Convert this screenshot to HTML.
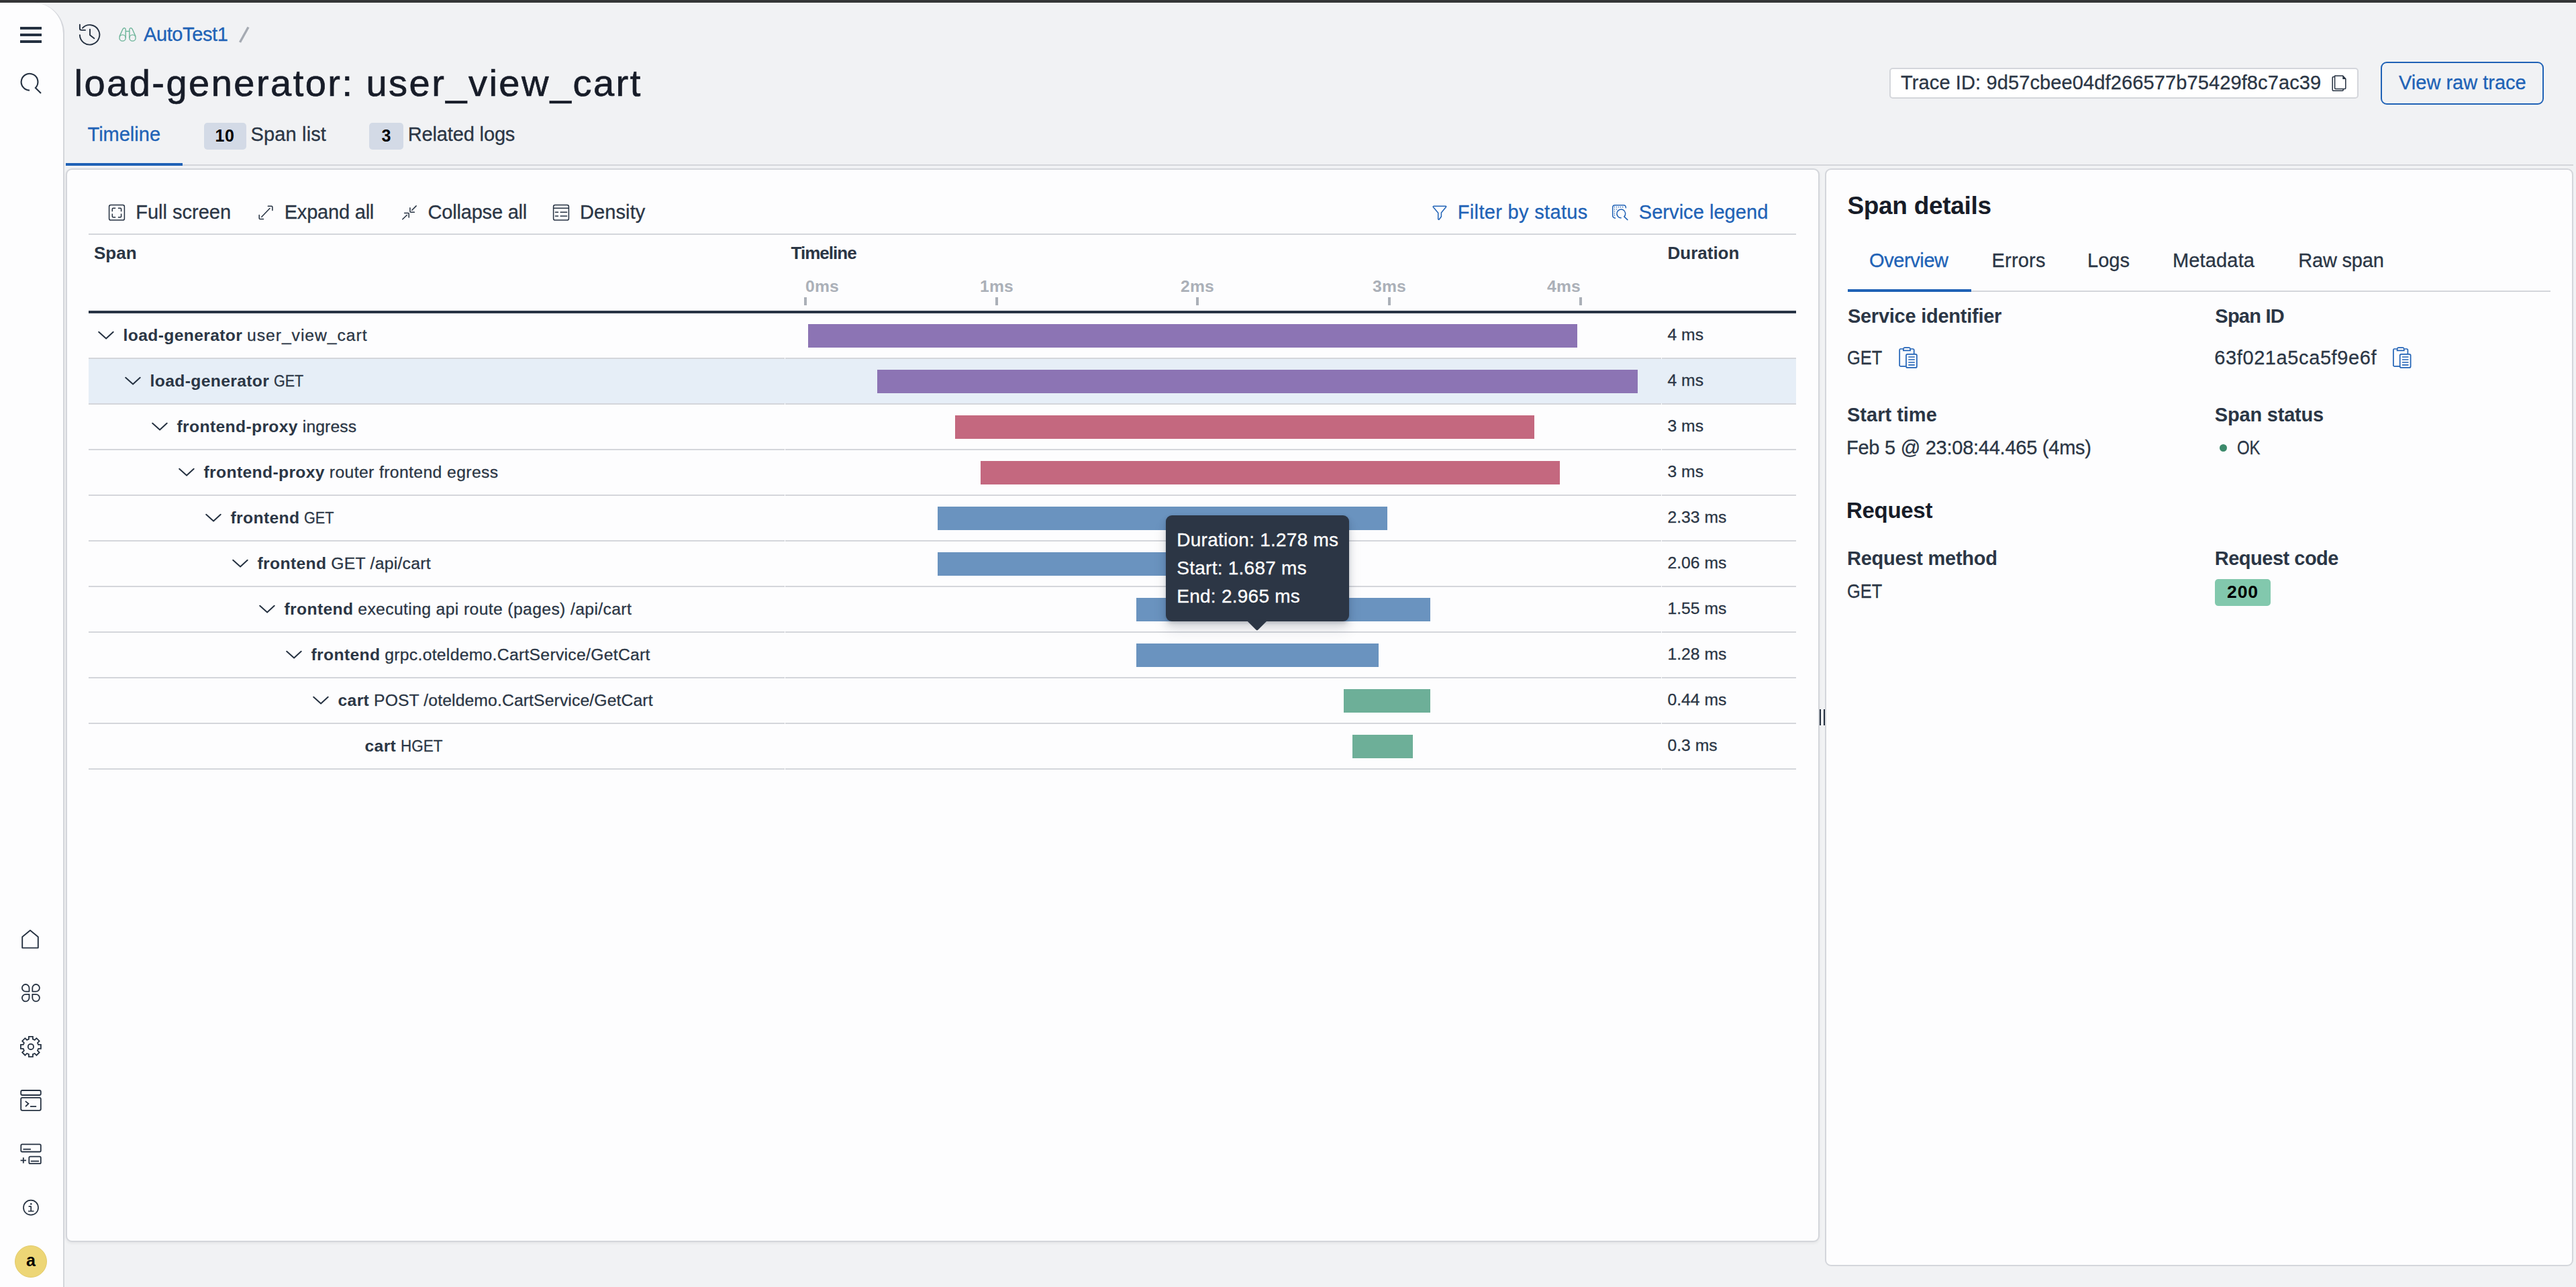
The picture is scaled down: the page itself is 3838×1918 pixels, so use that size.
<!DOCTYPE html>
<html><head><meta charset="utf-8"><title>Trace</title>
<style>
html,body{margin:0;padding:0;}
body{width:3838px;height:1918px;overflow:hidden;background:#f1f2f4;position:relative;font-family:"Liberation Sans", sans-serif;}
.t{position:absolute;white-space:pre;line-height:1;font-family:"Liberation Sans", sans-serif;}
.w{-webkit-text-stroke:0.3px currentColor;}
.r{position:absolute;display:block;}
b{font-weight:700;}
</style></head><body>
<div class="r" style="left:0px;top:0px;width:3838px;height:4px;background:#353637;"></div>
<div class="r" style="left:0;top:4px;width:94px;height:1914px;background:#fdfdfe;border-right:2px solid #d4d6db;border-top-right-radius:46px;"></div>
<div class="r" style="left:30px;top:40px;width:32px;height:4px;background:#253141;"></div>
<div class="r" style="left:30px;top:50px;width:32px;height:4px;background:#253141;"></div>
<div class="r" style="left:30px;top:60px;width:32px;height:4px;background:#253141;"></div>
<svg class="r" style="left:20px;top:100px" width="50" height="50" viewBox="20 100 50 50"><path d="M44 134.6 A12.4 12.4 0 1 1 52.9 130.9 L61 139" fill="none" stroke="#253141" stroke-width="2.1"/></svg>
<svg class="r" style="left:25px;top:1378px" width="40" height="42" viewBox="25 1378 40 42"><path d="M33.2 1412.6 V1396.3 L45 1386.6 L56.8 1396.3 V1412.6 Z" fill="none" stroke="#253141" stroke-width="1.9" stroke-linejoin="round"/></svg>
<svg class="r" style="left:25px;top:1460px" width="40" height="40" viewBox="25 1460 40 40"><g fill="none" stroke="#253141" stroke-width="1.8" stroke-linejoin="round"><path d="M43.5 1477.6 H38.3 A5.3 5.3 0 1 1 43.5 1472.3 Z"/><path d="M48.3 1477.6 V1472.3 A5.3 5.3 0 1 1 53.6 1477.6 Z"/><path d="M43.5 1481.8 V1487.1 A5.3 5.3 0 1 1 38.3 1481.8 Z"/><path d="M48.3 1481.8 H53.6 A5.3 5.3 0 1 1 48.3 1487.1 Z"/></g></svg>
<svg class="r" style="left:25px;top:1538px" width="42" height="44" viewBox="25 1538 42 44"><path d="M42.90 1548.70 L42.90 1544.90 L48.90 1544.90 L48.90 1548.70 L51.70 1549.86 L54.39 1547.17 L58.63 1551.41 L55.94 1554.10 L57.10 1556.90 L60.90 1556.90 L60.90 1562.90 L57.10 1562.90 L55.94 1565.70 L58.63 1568.39 L54.39 1572.63 L51.70 1569.94 L48.90 1571.10 L48.90 1574.90 L42.90 1574.90 L42.90 1571.10 L40.10 1569.94 L37.41 1572.63 L33.17 1568.39 L35.86 1565.70 L34.70 1562.90 L30.90 1562.90 L30.90 1556.90 L34.70 1556.90 L35.86 1554.10 L33.17 1551.41 L37.41 1547.17 L40.10 1549.86 Z" fill="none" stroke="#253141" stroke-width="1.8" stroke-linejoin="miter"/><circle cx="45.9" cy="1559.9" r="4.1" fill="none" stroke="#253141" stroke-width="1.8"/></svg>
<svg class="r" style="left:25px;top:1618px" width="42" height="44" viewBox="25 1618 42 44"><g fill="none" stroke="#253141" stroke-width="1.8"><rect x="31.2" y="1625" width="29.6" height="7" rx="2"/><rect x="31.2" y="1635.9" width="29.6" height="18.9" rx="2"/><path d="M37.8 1641.1 L42.4 1644.9 L38 1649" /><path d="M45 1648.9 H54.1"/></g></svg>
<svg class="r" style="left:25px;top:1700px" width="42" height="40" viewBox="25 1700 42 40"><g fill="none" stroke="#253141" stroke-width="1.8"><rect x="31.3" y="1705.4" width="29.5" height="11.1" rx="1.8"/><path d="M34.4 1712.7 H45.9"/><rect x="43.3" y="1723.6" width="17.5" height="10.6" rx="1.8"/><path d="M45.8 1730.5 H58"/><path d="M30.6 1729.3 H39 M34.8 1725.1 V1733.5"/></g></svg>
<svg class="r" style="left:28px;top:1782px" width="36" height="36" viewBox="28 1782 36 36"><g fill="none" stroke="#253141" stroke-width="1.7"><circle cx="46" cy="1799.7" r="11"/><path d="M46.2 1797.4 V1805 M42 1805 H50.5 M42.6 1797.8 H46.2"/></g><circle cx="46.3" cy="1794.3" r="1.3" fill="#253141"/></svg>
<div class="r" style="left:22px;top:1856px;width:48px;height:48px;box-sizing:border-box;border-radius:50%;background:#edd676;border:1px solid #e3cb6c;"></div>
<div class="t" style="left:39.0px;top:1866.1px;font-size:25px;font-weight:700;color:#000;">a</div>
<svg class="r" style="left:110px;top:30px" width="50" height="45" viewBox="110 30 50 45"><g fill="none" stroke="#253141" stroke-width="1.9" stroke-linecap="round" stroke-linejoin="round"><path d="M118.9 52.1 A14.7 14.7 0 1 0 122.9 41.8"/><path d="M118.9 36.8 V42.6 Q118.9 44.9 121.2 44.9 H127"/><path d="M134 43.8 V52.2 L140.4 57.2"/></g></svg>
<svg class="r" style="left:172px;top:36px" width="36" height="30" viewBox="172 36 36 30"><g fill="none" stroke="#6db59a" stroke-width="1.4" stroke-linejoin="round"><circle cx="182.6" cy="56.5" r="4.6"/><circle cx="197.5" cy="56.5" r="4.6"/><path d="M177.9 54.6 L183 43.3 Q184.6 40.9 186.4 42.2 Q187.2 42.9 187.2 44 V56.5"/><path d="M202.2 54.6 L197.1 43.3 Q195.5 40.9 193.7 42.2 Q192.9 42.9 192.9 44 V56.5"/><path d="M187.2 46.6 H192.9"/></g></svg>
<div class="t w" style="left:214.0px;top:36.5px;font-size:29px;font-weight:400;color:#2062b6;letter-spacing:-0.4px;">AutoTest1</div>
<svg class="r" style="left:350px;top:36px" width="28" height="32" viewBox="350 36 28 32"><path d="M370 40.5 L357.5 63" stroke="#a5aab2" stroke-width="3.4"/></svg>
<div class="t" style="left:110.6px;top:95.6px;font-size:56px;font-weight:400;color:#171c28;letter-spacing:2.47px;-webkit-text-stroke:0.7px #171c28;">load-generator: user_view_cart</div>
<div class="t w" style="left:130.5px;top:185.5px;font-size:29px;font-weight:400;color:#2062b6;">Timeline</div>
<div class="r" style="left:304px;top:183px;width:63px;height:40px;border-radius:5px;background:#d3dae6;"></div>
<div class="t" style="left:320.5px;top:189.8px;font-size:25px;font-weight:700;color:#000;letter-spacing:0.5px;">10</div>
<div class="t w" style="left:373.5px;top:185.5px;font-size:29px;font-weight:400;color:#2b3645;letter-spacing:0.15px;">Span list</div>
<div class="r" style="left:550px;top:183px;width:51px;height:40px;border-radius:5px;background:#d3dae6;"></div>
<div class="t" style="left:568.5px;top:189.8px;font-size:25px;font-weight:700;color:#000;">3</div>
<div class="t w" style="left:607.8px;top:185.5px;font-size:29px;font-weight:400;color:#2b3645;letter-spacing:-0.15px;">Related logs</div>
<div class="r" style="left:98px;top:245px;width:3736px;height:2px;background:#d4d6db;"></div>
<div class="r" style="left:98px;top:243px;width:174px;height:4px;background:#2062b6;"></div>
<div class="r" style="left:2815px;top:101px;width:699px;height:46px;box-sizing:border-box;border:2px solid #d4d6db;border-radius:5px;background:#fff;"></div>
<div class="t w" style="left:2832.0px;top:108.5px;font-size:29px;font-weight:400;color:#2b3645;letter-spacing:0.12px;">Trace ID: 9d57cbee04df266577b75429f8c7ac39</div>
<svg class="r" style="left:3470px;top:108px" width="30" height="32" viewBox="3470 108 30 32"><g fill="none" stroke="#253141" stroke-width="1.5" stroke-linejoin="round"><path d="M3478.6 112.9 H3490.6 L3494.8 117.5 V131.2 A1.2 1.2 0 0 1 3493.6 132.4 H3479.8 A1.2 1.2 0 0 1 3478.6 131.2 Z"/><path d="M3478.6 114.6 H3476.4 A1.2 1.2 0 0 0 3475.2 115.8 V134 A1.2 1.2 0 0 0 3476.4 135.2 H3490 A1.2 1.2 0 0 0 3491.2 134 V132.4"/></g><path d="M3490.3 112.5 L3495.2 117.9 H3490.3 Z" fill="#253141"/></svg>
<div class="r" style="left:3547px;top:92px;width:243px;height:64px;box-sizing:border-box;border:2.5px solid #2062b6;border-radius:9px;"></div>
<div class="t w" style="left:3574.0px;top:108.5px;font-size:29px;font-weight:400;color:#2062b6;">View raw trace</div>
<div class="r" style="left:98px;top:251px;width:2613px;height:1600px;box-sizing:border-box;border:2px solid #d4d6db;border-radius:9px;background:#fdfdfe;box-shadow:0 2px 4px rgba(0,0,0,0.06);"></div>
<svg class="r" style="left:158px;top:300px" width="34" height="34" viewBox="158 300 34 34"><g fill="none" stroke="#253141" stroke-width="1.5" stroke-linejoin="round"><rect x="162.6" y="305.6" width="22.8" height="22.5" rx="2.4"/><path d="M167.3 315.2 V311.4 Q167.3 310.2 168.5 310.2 H172.2 M175.9 310.2 H179.4 Q180.6 310.2 180.6 311.4 V315.2 M180.6 318.6 V322.5 Q180.6 323.7 179.4 323.7 H175.9 M172.2 323.7 H168.5 Q167.3 323.7 167.3 322.5 V318.6"/></g></svg>
<div class="t w" style="left:202.2px;top:301.5px;font-size:29px;font-weight:400;color:#2b3645;">Full screen</div>
<svg class="r" style="left:380px;top:300px" width="32" height="32" viewBox="380 300 32 32"><g fill="none" stroke="#253141" stroke-width="1.5" stroke-linecap="round"><path d="M402 310.6 L389.8 323.2 M399.3 307.2 H404.6 Q405.9 307.2 405.9 308.5 V313.4 M386.2 320.4 V325.3 Q386.2 326.6 387.5 326.6 H392.5"/></g></svg>
<div class="t w" style="left:423.7px;top:301.5px;font-size:29px;font-weight:400;color:#2b3645;letter-spacing:-0.2px;">Expand all</div>
<svg class="r" style="left:594px;top:300px" width="32" height="32" viewBox="594 300 32 32"><g fill="none" stroke="#253141" stroke-width="1.5" stroke-linecap="round"><path d="M620.1 306.9 L613.8 313.2 M610.9 309.8 V315 Q610.9 316.2 612.1 316.2 H617.4 M599.8 326.7 L606.3 320.5 M602.6 317.5 H608 Q609.2 317.5 609.2 318.7 V323.9"/></g></svg>
<div class="t w" style="left:637.6px;top:301.5px;font-size:29px;font-weight:400;color:#2b3645;letter-spacing:-0.2px;">Collapse all</div>
<svg class="r" style="left:820px;top:300px" width="32" height="34" viewBox="820 300 32 34"><g fill="none" stroke="#253141" stroke-width="1.5" stroke-linecap="round"><rect x="824.6" y="305.6" width="22.8" height="22.5" rx="2.4"/><path d="M824.6 310.2 H847.4 M827.4 316.2 H831.5 M835.1 316.2 H844.6 M827.4 322.1 H831.5 M835.1 322.1 H844.6"/></g></svg>
<div class="t w" style="left:864.0px;top:301.5px;font-size:29px;font-weight:400;color:#2b3645;letter-spacing:0.1px;">Density</div>
<svg class="r" style="left:2130px;top:300px" width="30" height="32" viewBox="2130 300 30 32"><path d="M2136.4 307.2 H2153.8 Q2155.2 307.4 2154.4 308.6 L2147.4 317 V322.8 L2144.4 326.8 Q2143.2 327.8 2142.7 326.5 V317.2 L2135.3 308.6 Q2134.8 307.4 2136.4 307.2 Z" fill="none" stroke="#2062b6" stroke-width="1.5" stroke-linejoin="round"/></svg>
<div class="t w" style="left:2171.8px;top:301.5px;font-size:29px;font-weight:400;color:#2062b6;letter-spacing:0.33px;">Filter by status</div>
<svg class="r" style="left:2398px;top:300px" width="34" height="34" viewBox="2398 300 34 34"><g fill="none" stroke="#2062b6" stroke-width="1.5" stroke-linecap="round"><path d="M2406.5 325.1 Q2402.7 324.6 2402.7 321 V309.3 Q2402.7 305.7 2406.3 305.7 H2419 Q2422.4 305.7 2422.4 309.7"/><path d="M2415.2 324.8 A6.4 6.4 0 1 1 2419.9 322.9 L2424.9 327.6"/></g><g fill="#2062b6"><circle cx="2405.5" cy="308.6" r="0.8"/><circle cx="2408.6" cy="308.6" r="0.8"/><circle cx="2411.6" cy="308.6" r="0.8"/><circle cx="2414.5" cy="308.6" r="0.8"/><circle cx="2417.7" cy="308.6" r="0.8"/><circle cx="2405.5" cy="311.7" r="0.8"/><circle cx="2408.6" cy="311.7" r="0.8"/><circle cx="2405.5" cy="314.7" r="0.8"/><circle cx="2405.5" cy="317.7" r="0.8"/><circle cx="2405.5" cy="320.6" r="0.8"/></g></svg>
<div class="t w" style="left:2441.8px;top:301.5px;font-size:29px;font-weight:400;color:#2062b6;letter-spacing:0.05px;">Service legend</div>
<div class="r" style="left:132px;top:348px;width:2544px;height:2px;background:#d4d6db;"></div>
<div class="t" style="left:140.0px;top:364.0px;font-size:26px;font-weight:700;color:#2b3645;">Span</div>
<div class="t" style="left:1178.6px;top:364.0px;font-size:26px;font-weight:700;color:#2b3645;letter-spacing:-1.0px;">Timeline</div>
<div class="t" style="left:2484.5px;top:364.0px;font-size:26px;font-weight:700;color:#2b3645;">Duration</div>
<div class="r" style="left:1198px;top:443px;width:4px;height:12px;background:#abb0b8;"></div>
<div class="r" style="left:1483px;top:443px;width:4px;height:12px;background:#abb0b8;"></div>
<div class="r" style="left:1782px;top:443px;width:4px;height:12px;background:#abb0b8;"></div>
<div class="r" style="left:2068px;top:443px;width:4px;height:12px;background:#abb0b8;"></div>
<div class="r" style="left:2353px;top:443px;width:4px;height:12px;background:#abb0b8;"></div>
<div class="t" style="left:1200.0px;top:415.1px;font-size:24.7px;font-weight:700;color:#abb0b8;letter-spacing:0.2px;">0ms</div>
<div class="t" style="left:1445px;width:80px;text-align:center;top:415.1px;font-size:24.7px;font-weight:700;color:#abb0b8;letter-spacing:0.2px">1ms</div>
<div class="t" style="left:1744px;width:80px;text-align:center;top:415.1px;font-size:24.7px;font-weight:700;color:#abb0b8;letter-spacing:0.2px">2ms</div>
<div class="t" style="left:2030px;width:80px;text-align:center;top:415.1px;font-size:24.7px;font-weight:700;color:#abb0b8;letter-spacing:0.2px">3ms</div>
<div class="t" style="left:2275px;width:80px;text-align:right;top:415.1px;font-size:24.7px;font-weight:700;color:#abb0b8;letter-spacing:0.2px">4ms</div>
<div class="r" style="left:132px;top:463px;width:2544px;height:4px;background:#283445;"></div>
<div class="r" style="left:132px;top:535px;width:2544px;height:66px;background:#e6eef7;"></div>
<div class="r" style="left:132px;top:533px;width:1037px;height:2px;background:#d4d6db;"></div>
<div class="r" style="left:1170px;top:533px;width:1305px;height:2px;background:#d4d6db;"></div>
<div class="r" style="left:2476px;top:533px;width:200px;height:2px;background:#d4d6db;"></div>
<div class="r" style="left:1204px;top:483px;width:1146px;height:35px;background:#8c74b4;"></div>
<svg class="r" style="left:144px;top:490.3px" width="30" height="20.0" viewBox="144 490.3 30 20.0"><path d="M147.2 495.0 L158.1 504.90000000000003 L168.7 495.0" fill="none" stroke="#253141" stroke-width="2" stroke-linecap="round" stroke-linejoin="round"/></svg>
<div class="t" style="left:183.5px;top:487.7px;font-size:24.7px;color:#2b3645"><b style="letter-spacing:0.35px">load-generator</b> <span class="w" style="letter-spacing:0.95px">user_view_cart</span></div>
<div class="t w" style="left:2484.5px;top:487.2px;font-size:24.7px;font-weight:400;color:#2b3645;">4 ms</div>
<div class="r" style="left:132px;top:601px;width:1037px;height:2px;background:#d4d6db;"></div>
<div class="r" style="left:1170px;top:601px;width:1305px;height:2px;background:#d4d6db;"></div>
<div class="r" style="left:2476px;top:601px;width:200px;height:2px;background:#d4d6db;"></div>
<div class="r" style="left:1307px;top:551px;width:1133px;height:35px;background:#8c74b4;"></div>
<svg class="r" style="left:184px;top:558.3px" width="30" height="20.0" viewBox="184 558.3 30 20.0"><path d="M187.2 563.0 L198.1 572.9 L208.7 563.0" fill="none" stroke="#253141" stroke-width="2" stroke-linecap="round" stroke-linejoin="round"/></svg>
<div class="t" style="left:223.5px;top:555.7px;font-size:24.7px;color:#2b3645"><b style="letter-spacing:0.35px">load-generator</b> <span class="w" style="display:inline-block;transform:scaleX(0.87);transform-origin:0 0">GET</span></div>
<div class="t w" style="left:2484.5px;top:555.2px;font-size:24.7px;font-weight:400;color:#2b3645;">4 ms</div>
<div class="r" style="left:132px;top:669px;width:1037px;height:2px;background:#d4d6db;"></div>
<div class="r" style="left:1170px;top:669px;width:1305px;height:2px;background:#d4d6db;"></div>
<div class="r" style="left:2476px;top:669px;width:200px;height:2px;background:#d4d6db;"></div>
<div class="r" style="left:1423px;top:619px;width:863px;height:35px;background:#c4687f;"></div>
<svg class="r" style="left:224px;top:626.3px" width="30" height="20.0" viewBox="224 626.3 30 20.0"><path d="M227.2 631.0 L238.1 640.9 L248.7 631.0" fill="none" stroke="#253141" stroke-width="2" stroke-linecap="round" stroke-linejoin="round"/></svg>
<div class="t" style="left:263.5px;top:623.7px;font-size:24.7px;color:#2b3645"><b style="letter-spacing:0.35px">frontend-proxy</b> <span class="w" style="letter-spacing:0.1px">ingress</span></div>
<div class="t w" style="left:2484.5px;top:623.2px;font-size:24.7px;font-weight:400;color:#2b3645;">3 ms</div>
<div class="r" style="left:132px;top:737px;width:1037px;height:2px;background:#d4d6db;"></div>
<div class="r" style="left:1170px;top:737px;width:1305px;height:2px;background:#d4d6db;"></div>
<div class="r" style="left:2476px;top:737px;width:200px;height:2px;background:#d4d6db;"></div>
<div class="r" style="left:1461px;top:687px;width:863px;height:35px;background:#c4687f;"></div>
<svg class="r" style="left:264px;top:694.3px" width="30" height="20.0" viewBox="264 694.3 30 20.0"><path d="M267.2 699.0 L278.1 708.9 L288.7 699.0" fill="none" stroke="#253141" stroke-width="2" stroke-linecap="round" stroke-linejoin="round"/></svg>
<div class="t" style="left:303.5px;top:691.7px;font-size:24.7px;color:#2b3645"><b style="letter-spacing:0.35px">frontend-proxy</b> <span class="w" style="letter-spacing:0.4px">router frontend egress</span></div>
<div class="t w" style="left:2484.5px;top:691.2px;font-size:24.7px;font-weight:400;color:#2b3645;">3 ms</div>
<div class="r" style="left:132px;top:805px;width:1037px;height:2px;background:#d4d6db;"></div>
<div class="r" style="left:1170px;top:805px;width:1305px;height:2px;background:#d4d6db;"></div>
<div class="r" style="left:2476px;top:805px;width:200px;height:2px;background:#d4d6db;"></div>
<div class="r" style="left:1397px;top:755px;width:670px;height:35px;background:#6a93bf;"></div>
<svg class="r" style="left:304px;top:762.3px" width="30" height="20.0" viewBox="304 762.3 30 20.0"><path d="M307.2 767.0 L318.1 776.9 L328.7 767.0" fill="none" stroke="#253141" stroke-width="2" stroke-linecap="round" stroke-linejoin="round"/></svg>
<div class="t" style="left:343.5px;top:759.7px;font-size:24.7px;color:#2b3645"><b style="letter-spacing:0.35px">frontend</b> <span class="w" style="display:inline-block;transform:scaleX(0.877);transform-origin:0 0">GET</span></div>
<div class="t w" style="left:2484.5px;top:759.2px;font-size:24.7px;font-weight:400;color:#2b3645;">2.33 ms</div>
<div class="r" style="left:132px;top:873px;width:1037px;height:2px;background:#d4d6db;"></div>
<div class="r" style="left:1170px;top:873px;width:1305px;height:2px;background:#d4d6db;"></div>
<div class="r" style="left:2476px;top:873px;width:200px;height:2px;background:#d4d6db;"></div>
<div class="r" style="left:1397px;top:823px;width:592px;height:35px;background:#6a93bf;"></div>
<svg class="r" style="left:344px;top:830.3px" width="30" height="20.0" viewBox="344 830.3 30 20.0"><path d="M347.2 835.0 L358.1 844.9 L368.7 835.0" fill="none" stroke="#253141" stroke-width="2" stroke-linecap="round" stroke-linejoin="round"/></svg>
<div class="t" style="left:383.5px;top:827.7px;font-size:24.7px;color:#2b3645"><b style="letter-spacing:0.35px">frontend</b> <span class="w" style="letter-spacing:0.27px">GET /api/cart</span></div>
<div class="t w" style="left:2484.5px;top:827.2px;font-size:24.7px;font-weight:400;color:#2b3645;">2.06 ms</div>
<div class="r" style="left:132px;top:941px;width:1037px;height:2px;background:#d4d6db;"></div>
<div class="r" style="left:1170px;top:941px;width:1305px;height:2px;background:#d4d6db;"></div>
<div class="r" style="left:2476px;top:941px;width:200px;height:2px;background:#d4d6db;"></div>
<div class="r" style="left:1693px;top:891px;width:438px;height:35px;background:#6a93bf;"></div>
<svg class="r" style="left:384px;top:898.3px" width="30" height="20.0" viewBox="384 898.3 30 20.0"><path d="M387.2 903.0 L398.1 912.9 L408.7 903.0" fill="none" stroke="#253141" stroke-width="2" stroke-linecap="round" stroke-linejoin="round"/></svg>
<div class="t" style="left:423.5px;top:895.7px;font-size:24.7px;color:#2b3645"><b style="letter-spacing:0.35px">frontend</b> <span class="w" style="letter-spacing:0.38px">executing api route (pages) /api/cart</span></div>
<div class="t w" style="left:2484.5px;top:895.2px;font-size:24.7px;font-weight:400;color:#2b3645;">1.55 ms</div>
<div class="r" style="left:132px;top:1009px;width:1037px;height:2px;background:#d4d6db;"></div>
<div class="r" style="left:1170px;top:1009px;width:1305px;height:2px;background:#d4d6db;"></div>
<div class="r" style="left:2476px;top:1009px;width:200px;height:2px;background:#d4d6db;"></div>
<div class="r" style="left:1693px;top:959px;width:361px;height:35px;background:#6a93bf;"></div>
<svg class="r" style="left:424px;top:966.3px" width="30" height="20.0" viewBox="424 966.3 30 20.0"><path d="M427.2 971.0 L438.1 980.9 L448.7 971.0" fill="none" stroke="#253141" stroke-width="2" stroke-linecap="round" stroke-linejoin="round"/></svg>
<div class="t" style="left:463.5px;top:963.7px;font-size:24.7px;color:#2b3645"><b style="letter-spacing:0.35px">frontend</b> <span class="w" style="letter-spacing:0.3px">grpc.oteldemo.CartService/GetCart</span></div>
<div class="t w" style="left:2484.5px;top:963.2px;font-size:24.7px;font-weight:400;color:#2b3645;">1.28 ms</div>
<div class="r" style="left:132px;top:1077px;width:1037px;height:2px;background:#d4d6db;"></div>
<div class="r" style="left:1170px;top:1077px;width:1305px;height:2px;background:#d4d6db;"></div>
<div class="r" style="left:2476px;top:1077px;width:200px;height:2px;background:#d4d6db;"></div>
<div class="r" style="left:2002px;top:1027px;width:129px;height:35px;background:#6daf98;"></div>
<svg class="r" style="left:464px;top:1034.3px" width="30" height="20.0" viewBox="464 1034.3 30 20.0"><path d="M467.2 1039.0 L478.1 1048.8999999999999 L488.7 1039.0" fill="none" stroke="#253141" stroke-width="2" stroke-linecap="round" stroke-linejoin="round"/></svg>
<div class="t" style="left:503.5px;top:1031.7px;font-size:24.7px;color:#2b3645"><b style="letter-spacing:0.35px">cart</b> <span class="w" style="letter-spacing:0.13px">POST /oteldemo.CartService/GetCart</span></div>
<div class="t w" style="left:2484.5px;top:1031.2px;font-size:24.7px;font-weight:400;color:#2b3645;">0.44 ms</div>
<div class="r" style="left:132px;top:1145px;width:1037px;height:2px;background:#d4d6db;"></div>
<div class="r" style="left:1170px;top:1145px;width:1305px;height:2px;background:#d4d6db;"></div>
<div class="r" style="left:2476px;top:1145px;width:200px;height:2px;background:#d4d6db;"></div>
<div class="r" style="left:2015px;top:1095px;width:90px;height:35px;background:#6daf98;"></div>
<div class="t" style="left:543.5px;top:1099.7px;font-size:24.7px;color:#2b3645"><b style="letter-spacing:0.35px">cart</b> <span class="w" style="display:inline-block;transform:scaleX(0.91);transform-origin:0 0">HGET</span></div>
<div class="t w" style="left:2484.5px;top:1099.2px;font-size:24.7px;font-weight:400;color:#2b3645;">0.3 ms</div>
<div class="r" style="left:1737px;top:768px;width:273px;height:158px;border-radius:9px;background:#2c3645;box-shadow:0 2px 4px rgba(20,30,50,0.16), 0 6px 12px rgba(20,30,50,0.13), 0 14px 22px rgba(20,30,50,0.09);"></div>
<svg class="r" style="left:1850px;top:920px" width="45" height="25" viewBox="1850 920 45 25"><path d="M1857.8 925 H1888 L1874.5 938.6 Q1872.9 940.2 1871.3 938.6 Z" fill="#2c3645"/></svg>
<div class="t" style="left:1753.3px;top:790.6px;font-size:28px;font-weight:400;color:#fff;letter-spacing:0.25px;-webkit-text-stroke:0.3px #fff;">Duration: 1.278 ms</div>
<div class="t" style="left:1753.3px;top:832.8px;font-size:28px;font-weight:400;color:#fff;letter-spacing:0.25px;-webkit-text-stroke:0.3px #fff;">Start: 1.687 ms</div>
<div class="t" style="left:1753.3px;top:875.3px;font-size:28px;font-weight:400;color:#fff;letter-spacing:0.25px;-webkit-text-stroke:0.3px #fff;">End: 2.965 ms</div>
<div class="r" style="left:2711px;top:1057px;width:2px;height:24px;background:#253141;"></div>
<div class="r" style="left:2717px;top:1057px;width:2px;height:24px;background:#253141;"></div>
<div class="r" style="left:2719px;top:251px;width:1115px;height:1636px;box-sizing:border-box;border:2px solid #d4d6db;border-radius:9px;background:#fdfdfe;"></div>
<div class="t" style="left:2752.4px;top:287.7px;font-size:37px;font-weight:700;color:#171c28;letter-spacing:-0.3px;">Span details</div>
<div class="t w" style="left:2785.0px;top:374.1px;font-size:29px;font-weight:400;color:#2062b6;letter-spacing:-0.4px;">Overview</div>
<div class="t w" style="left:2967.5px;top:374.1px;font-size:29px;font-weight:400;color:#2b3645;letter-spacing:0.2px;">Errors</div>
<div class="t w" style="left:3110.0px;top:374.1px;font-size:29px;font-weight:400;color:#2b3645;">Logs</div>
<div class="t w" style="left:3237.0px;top:374.1px;font-size:29px;font-weight:400;color:#2b3645;letter-spacing:0.15px;">Metadata</div>
<div class="t w" style="left:3424.3px;top:374.1px;font-size:29px;font-weight:400;color:#2b3645;letter-spacing:-0.2px;">Raw span</div>
<div class="r" style="left:2753px;top:433px;width:1047px;height:2px;background:#d4d6db;"></div>
<div class="r" style="left:2753px;top:431px;width:184px;height:4px;background:#2062b6;"></div>
<div class="t" style="left:2752.9px;top:456.5px;font-size:29px;font-weight:700;color:#2b3645;letter-spacing:-0.25px;">Service identifier</div>
<div class="t" style="left:3300.3px;top:456.5px;font-size:29px;font-weight:700;color:#2b3645;letter-spacing:-0.75px;">Span ID</div>
<div class="t w" style="left:2752.0px;top:518.5px;font-size:29px;font-weight:400;color:#2b3645;transform:scaleX(0.876);transform-origin:0 0;">GET</div>
<div class="t w" style="left:3299.3px;top:518.5px;font-size:29px;font-weight:400;color:#2b3645;letter-spacing:0.6px;">63f021a5ca5f9e6f</div>
<svg class="r" style="left:2825px;top:512px" width="37" height="40" viewBox="2825 512 37 40"><g fill="none" stroke="#2062b6" stroke-width="1.7"><path d="M2835.1000000000004 520.0 H2831.3 A1.8 1.8 0 0 0 2830.2000000000003 521.8000000000001 V544.8000000000001 A1.8 1.8 0 0 0 2832.0 545.8000000000001 H2839.3"/><path d="M2846.8 520.0 H2849.9 A1.8 1.8 0 0 1 2851.7000000000003 521.8000000000001 V527.0"/><path d="M2835.9 522.4000000000001 V519.8000000000001 A1.8 1.8 0 0 1 2837.7000000000003 518.1 H2844.3 A1.8 1.8 0 0 1 2846.1000000000004 519.8000000000001 V522.4000000000001 Z"/><rect x="2840.0" y="527.8000000000001" width="15.9" height="20.1" rx="2"/></g><g stroke="#2062b6" stroke-width="1.6"><path d="M2843.3 532.0 H2852.8 M2843.3 536.0 H2852.8 M2843.3 540.0 H2852.8 M2843.3 543.9000000000001 H2852.8"/></g></svg>
<svg class="r" style="left:3561px;top:512px" width="37" height="40" viewBox="3561 512 37 40"><g fill="none" stroke="#2062b6" stroke-width="1.7"><path d="M3570.8 520.0 H3567 A1.8 1.8 0 0 0 3565.9 521.8000000000001 V544.8000000000001 A1.8 1.8 0 0 0 3567.7 545.8000000000001 H3575"/><path d="M3582.5 520.0 H3585.6 A1.8 1.8 0 0 1 3587.4 521.8000000000001 V527.0"/><path d="M3571.6 522.4000000000001 V519.8000000000001 A1.8 1.8 0 0 1 3573.4 518.1 H3580 A1.8 1.8 0 0 1 3581.8 519.8000000000001 V522.4000000000001 Z"/><rect x="3575.7" y="527.8000000000001" width="15.9" height="20.1" rx="2"/></g><g stroke="#2062b6" stroke-width="1.6"><path d="M3579 532.0 H3588.5 M3579 536.0 H3588.5 M3579 540.0 H3588.5 M3579 543.9000000000001 H3588.5"/></g></svg>
<div class="t" style="left:2752.0px;top:603.5px;font-size:29px;font-weight:700;color:#2b3645;">Start time</div>
<div class="t" style="left:3299.8px;top:603.5px;font-size:29px;font-weight:700;color:#2b3645;letter-spacing:-0.2px;">Span status</div>
<div class="t w" style="left:2751.0px;top:652.9px;font-size:29px;font-weight:400;color:#2b3645;letter-spacing:-0.25px;">Feb 5 @ 23:08:44.465 (4ms)</div>
<div class="r" style="left:3306.5px;top:662px;width:11px;height:11px;border-radius:50%;background:#3c8a6b;"></div>
<div class="t w" style="left:3333.0px;top:652.9px;font-size:29px;font-weight:400;color:#2b3645;transform:scaleX(0.825);transform-origin:0 0;">OK</div>
<div class="t" style="left:2751.0px;top:743.7px;font-size:33px;font-weight:700;color:#171c28;letter-spacing:-0.3px;">Request</div>
<div class="t" style="left:2752.0px;top:817.5px;font-size:29px;font-weight:700;color:#2b3645;letter-spacing:-0.25px;">Request method</div>
<div class="t" style="left:3299.8px;top:817.5px;font-size:29px;font-weight:700;color:#2b3645;letter-spacing:-0.5px;">Request code</div>
<div class="t w" style="left:2752.0px;top:866.8px;font-size:29px;font-weight:400;color:#2b3645;transform:scaleX(0.876);transform-origin:0 0;">GET</div>
<div class="r" style="left:3300px;top:863px;width:83px;height:40px;border-radius:5px;background:#82c8ad;"></div>
<div class="t" style="left:3318.0px;top:868.6px;font-size:26.5px;font-weight:700;color:#000;letter-spacing:0.9px;">200</div>
</body></html>
